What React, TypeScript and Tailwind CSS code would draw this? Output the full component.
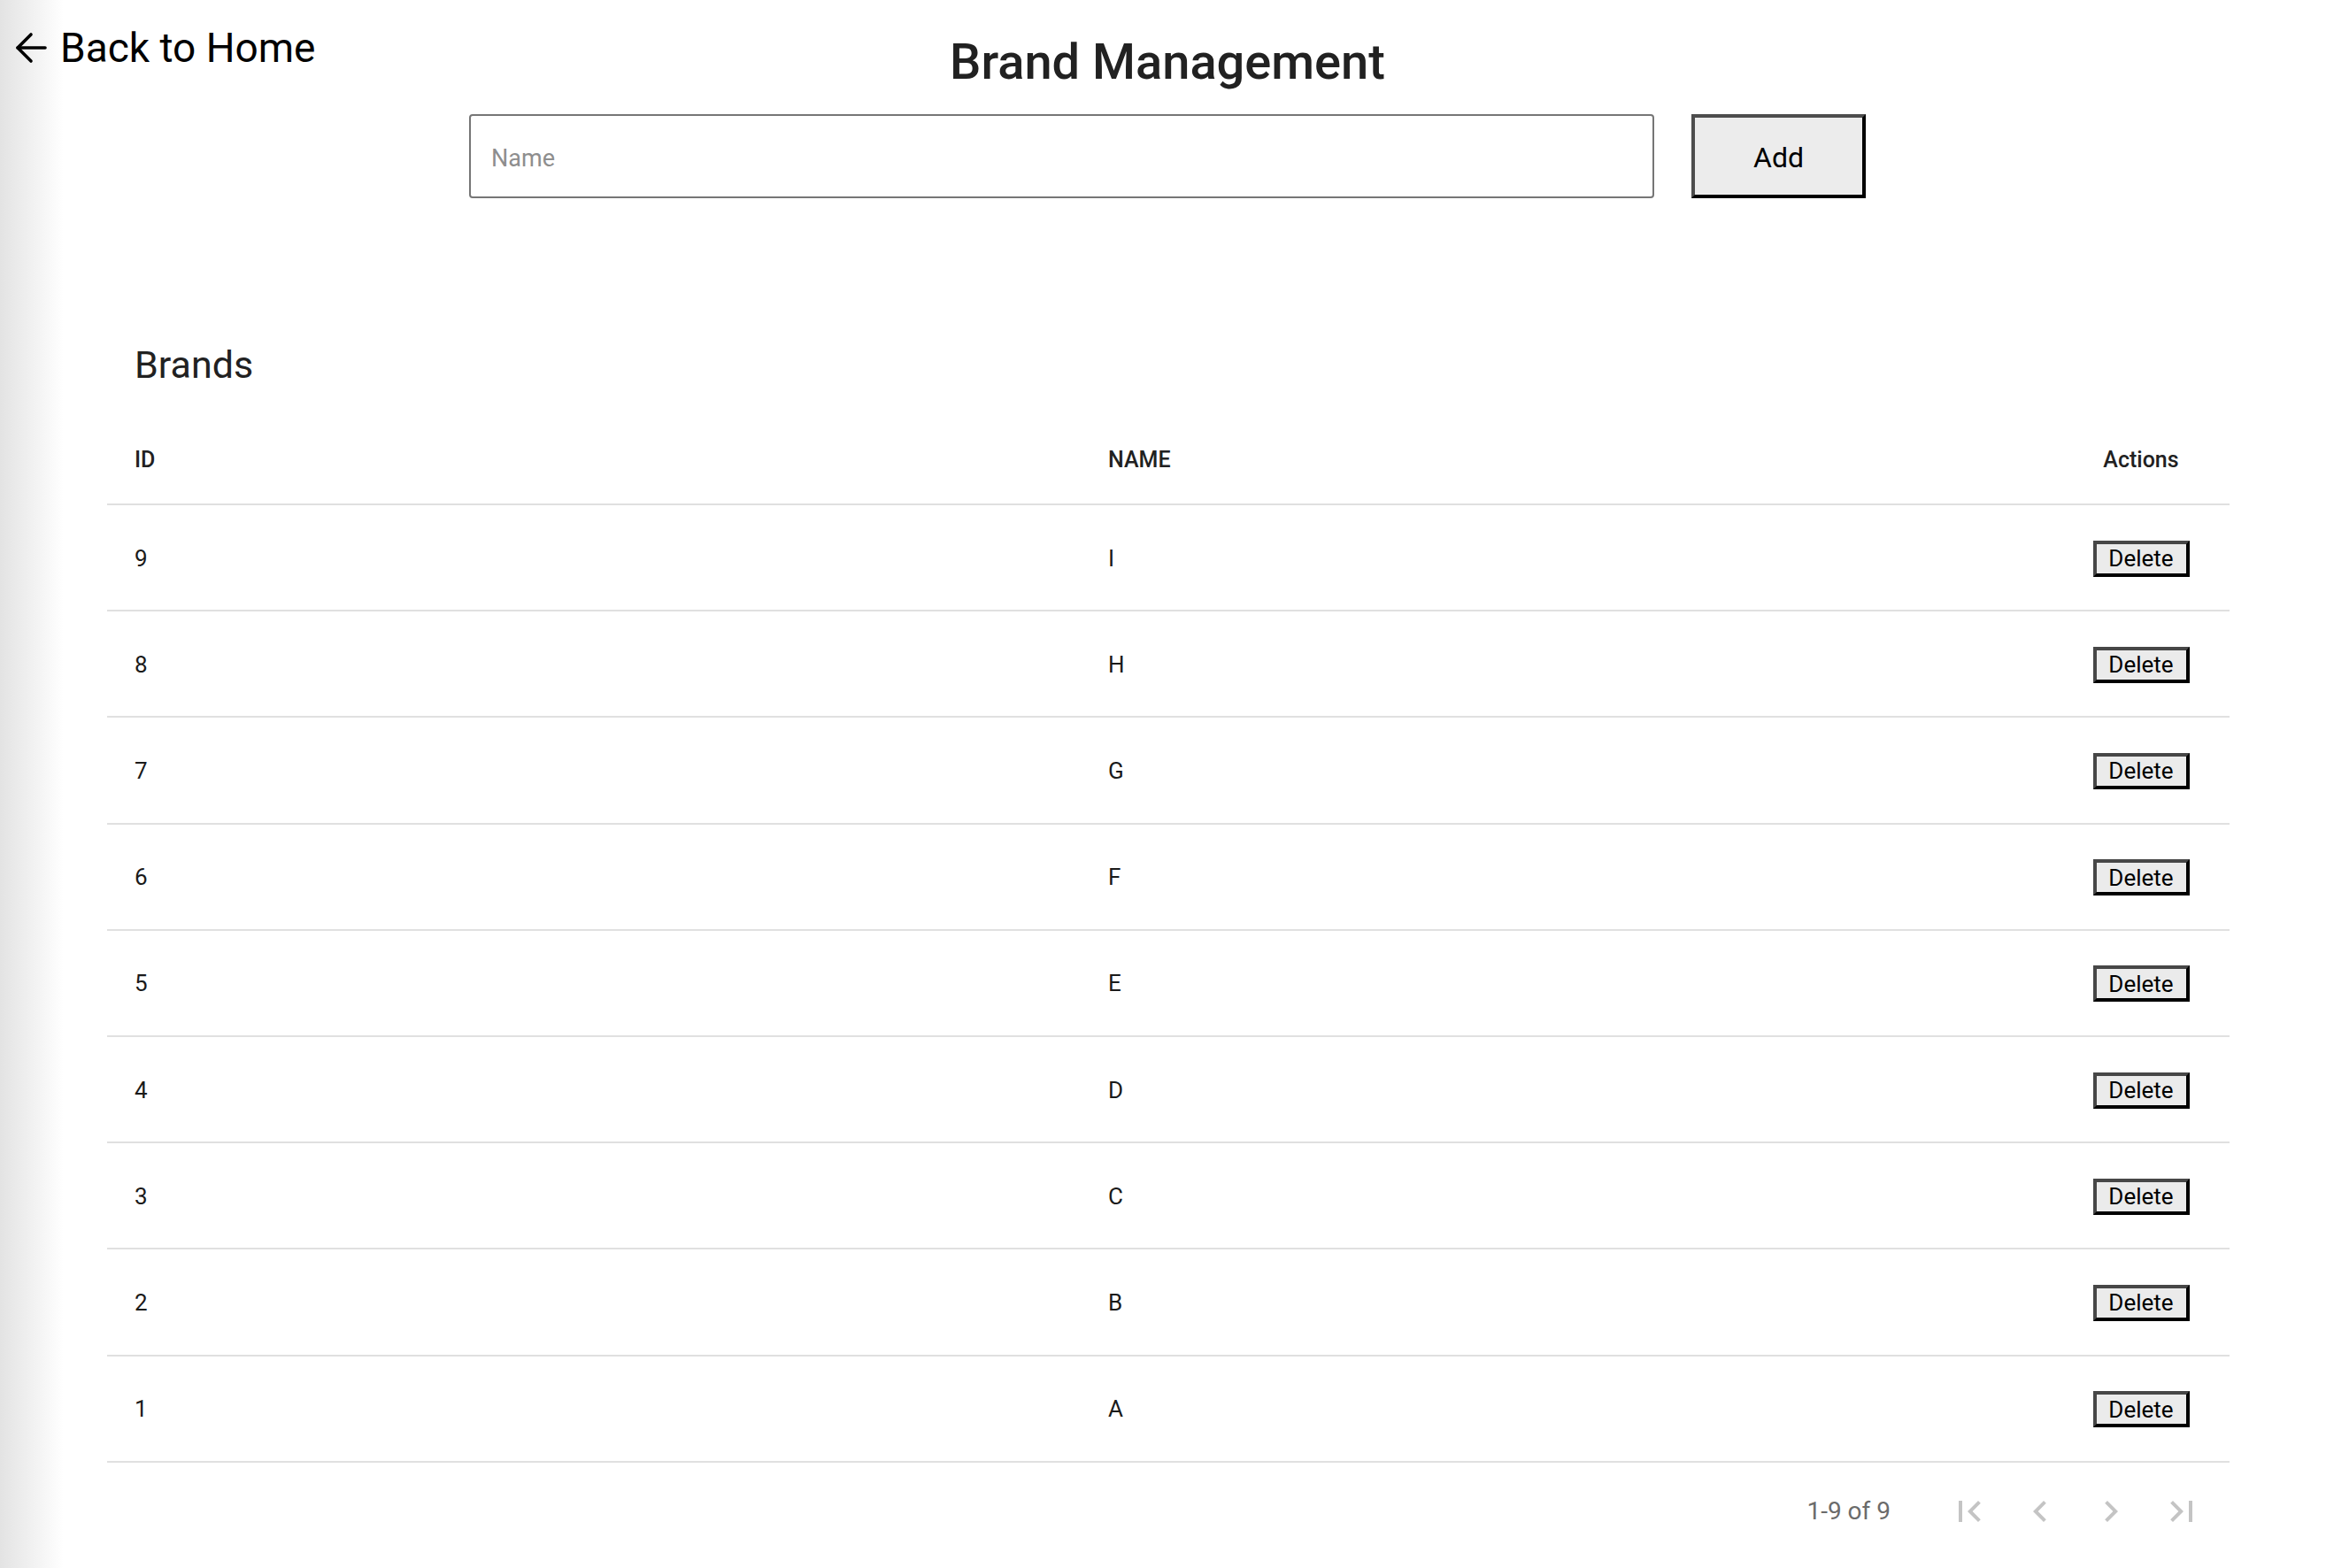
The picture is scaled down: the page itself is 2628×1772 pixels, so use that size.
import React from "react";

interface Brand {
  id: number;
  name: string;
}

const BRANDS: Brand[] = [
  { id: 9, name: "I" },
  { id: 8, name: "H" },
  { id: 7, name: "G" },
  { id: 6, name: "F" },
  { id: 5, name: "E" },
  { id: 4, name: "D" },
  { id: 3, name: "C" },
  { id: 2, name: "B" },
  { id: 1, name: "A" },
];

// material icon paths for the pager
const PAGER_ICONS = [
  "M18.41 16.59 13.82 12l4.59-4.59L17 6l-6 6 6 6zM6 6h2v12H6z",
  "M15.41 7.41 14 6l-6 6 6 6 1.41-1.41L10.83 12z",
  "M10 6 8.59 7.41 13.17 12l-4.58 4.59L10 18l6-6z",
  "M5.59 7.41 10.18 12l-4.59 4.59L7 18l6-6-6-6zM16 6h2v12h-2z",
];

const BackArrow = () => (
  <svg width="36" height="36" viewBox="0 0 36 36" fill="none" stroke="black" strokeWidth="3.6" strokeLinecap="round" strokeLinejoin="round">
    <path d="M34 18H3" />
    <path d="M18 3 3 18l15 15" />
  </svg>
);

const App = () => {
  return (
    <div className="min-h-screen w-full bg-[linear-gradient(to_right,#e3e3e3_0px,#ffffff_72px)] font-['Roboto','Liberation_Sans',sans-serif] text-[#212121]">
      <div className="grid grid-cols-[1fr_auto_1fr]">
        <a href="#" className="flex items-center gap-[15px] self-start pl-[17px] pt-[26px] text-[46px] leading-[56px] text-black">
          <BackArrow />
          <span>Back to Home</span>
        </a>
        <h1 className="ml-[10px] pt-[37px] text-[56px] font-medium leading-[66px] text-[#212121]">
          Brand Management
        </h1>
        <div />
      </div>

      <div className="mt-[26px] flex justify-center gap-[42px] pl-[10px]">
        <input
          placeholder="Name"
          className="h-[95px] w-[1339px] rounded-[4px] border-2 border-[#767676] bg-white px-[23px] pt-[5px] text-[27px] outline-none placeholder:text-[#8e8e8e]"
        />
        <button className="h-[95px] w-[197px] border-4 border-t-[#4d4d4d] border-l-[#4d4d4d] border-r-black border-b-black bg-[#ececec] pt-[2px] text-[32px] text-black">
          Add
        </button>
      </div>

      <div className="mt-[126px] pl-[121px] pr-[109px]">
        <div className="flex h-[124px] items-center pl-[31px] text-[43px] leading-none text-[#212121]">
          Brands
        </div>

        <div className="flex h-[97px] items-center border-b-2 border-[#e0e0e0] pb-[4px] text-[25px] font-medium text-[#212121]">
          <div className="w-[1099px] pl-[31px]">ID</div>
          <div className="flex-1 pl-[32px]">NAME</div>
          <div className="flex w-[200px] justify-center">Actions</div>
        </div>

        {BRANDS.map((brand) => (
          <div key={brand.id} className="flex h-[120.2px] items-center border-b-2 border-[#e0e0e0] pt-[2px] text-[26px] text-[#1a1a1a]">
            <div className="w-[1099px] pl-[31px]">{brand.id}</div>
            <div className="flex-1 pl-[32px]">{brand.name}</div>
            <div className="flex w-[200px] justify-center">
              <button className="flex h-[41px] w-[109px] items-center justify-center border-4 border-t-[#474747] border-l-[#474747] border-r-black border-b-black bg-[#ebebeb] text-[26px] leading-none text-black">
                Delete
              </button>
            </div>
          </div>
        ))}

        <div className="flex h-[110px] items-center justify-end pr-[30px]">
          <span className="mr-[65px] text-[28px] text-[#6b6b6b]">1-9 of 9</span>
          <div className="flex gap-[32px]">
            {PAGER_ICONS.map((d) => (
              <svg key={d} width="48" height="48" viewBox="0 0 24 24" fill="#c4c4c4">
                <path d={d} />
              </svg>
            ))}
          </div>
        </div>
      </div>
    </div>
  );
};

export default App;
